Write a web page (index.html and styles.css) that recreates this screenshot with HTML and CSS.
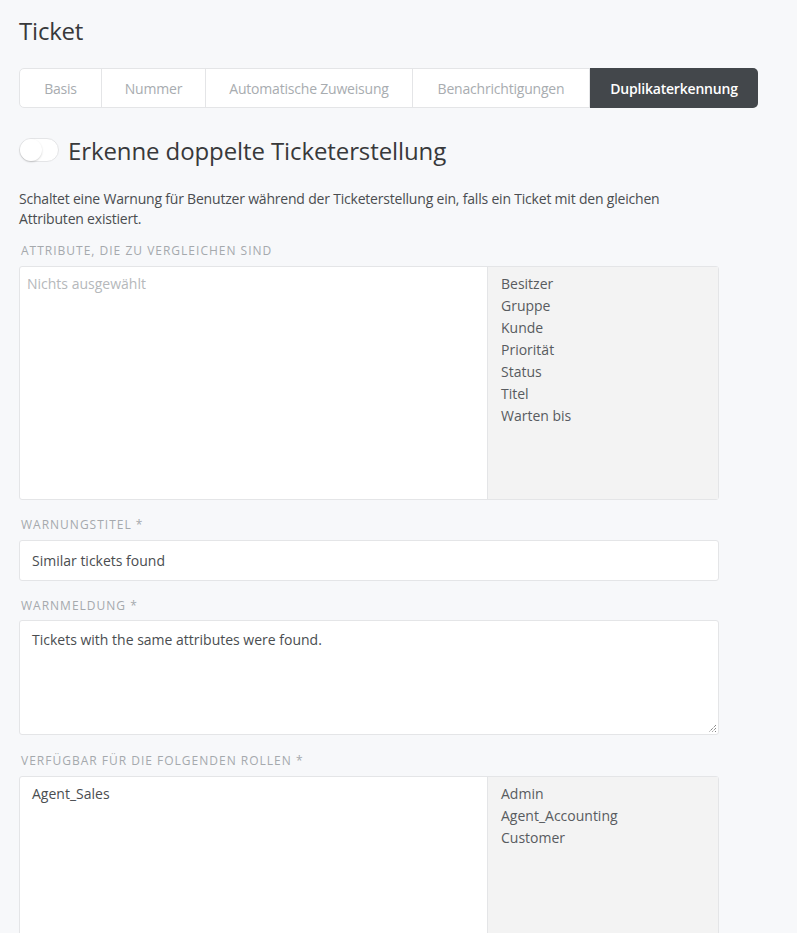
FILE: index.html
```html
<!DOCTYPE html>
<html lang="de">
<head>
<meta charset="utf-8">
<title>Ticket</title>
<link rel="stylesheet" href="styles.css">
</head>
<body>
<div class="page">
  <h1 class="title">Ticket</h1>
  <nav class="tabs">
    <div class="tab tab-basis">Basis</div>
    <div class="tab tab-nummer">Nummer</div>
    <div class="tab tab-auto">Automatische Zuweisung</div>
    <div class="tab tab-notify">Benachrichtigungen</div>
    <div class="tab tab-dup active">Duplikaterkennung</div>
  </nav>

  <div class="switch-row">
    <span class="switch"><span class="knob"></span></span>
    <h2 class="switch-title">Erkenne doppelte Ticketerstellung</h2>
  </div>

  <p class="desc">Schaltet eine Warnung für Benutzer während der Ticketerstellung ein, falls ein Ticket mit den gleichen Attributen existiert.</p>

  <div class="field field-attr">
    <div class="label">Attribute, die zu vergleichen sind</div>
    <div class="columnselect cs-attr">
      <div class="cs-selected"><span class="placeholder">Nichts ausgewählt</span></div>
      <div class="cs-options">
        <div>Besitzer</div>
        <div>Gruppe</div>
        <div>Kunde</div>
        <div>Priorität</div>
        <div>Status</div>
        <div>Titel</div>
        <div>Warten bis</div>
      </div>
    </div>
  </div>

  <div class="field">
    <div class="label">Warnungstitel *</div>
    <div class="input">Similar tickets found</div>
  </div>

  <div class="field field-msg">
    <div class="label">Warnmeldung *</div>
    <div class="textarea">Tickets with the same attributes were found.
      <svg class="grip" width="9" height="9" viewBox="0 0 9 9"><path d="M8 1L1 8M8 4L4 8M8 7L7 8" stroke="#555" stroke-width="1" stroke-dasharray="1 1"/></svg>
    </div>
  </div>

  <div class="field field-roles">
    <div class="label">Verfügbar für die folgenden Rollen *</div>
    <div class="columnselect cs-roles">
      <div class="cs-selected"><div class="sel-item">Agent_Sales</div></div>
      <div class="cs-options">
        <div>Admin</div>
        <div>Agent_Accounting</div>
        <div>Customer</div>
      </div>
    </div>
  </div>
</div>
</body>
</html>
```

FILE: styles.css
```css
* { box-sizing: border-box; }
html, body { margin: 0; padding: 0; }
body {
  background: #f7f8fa;
  font-family: "Open Sans", "Noto Sans", sans-serif;
  color: #4a4d50;
  overflow: hidden;
  height: 933px;
}
.page { padding: 14px 0 0 19px; width: 740px; }
.title {
  margin: 0;
  font-size: 24px;
  font-weight: 400;
  color: #38393b;
  line-height: 34px;
  letter-spacing: -0.2px;
}
.tabs {
  display: flex;
  margin-top: 20px;
  height: 40px;
  width: 739px;
  border: 1px solid #e4e5e7;
  border-radius: 5px;
  background: #fff;
}
.tab {
  display: flex;
  align-items: center;
  justify-content: center;
  font-size: 14px;
  color: #a8acb0;
  border-right: 1px solid #e4e5e7;
  letter-spacing: -0.2px;
}
.tab-basis { width: 82px; }
.tab-nummer { width: 104px; }
.tab-auto { width: 207px; }
.tab-notify { width: 177px; }
.tab-dup { flex: 1; border-right: 0; }
.tab.active {
  background: #43474b;
  color: #fff;
  font-weight: 600;
  border-radius: 0 5px 5px 0;
  margin: -1px -1px -1px 0;
}
.switch-row {
  display: flex;
  align-items: center;
  margin-top: 27px;
  height: 30px;
}
.switch {
  width: 40px;
  height: 24px;
  border-radius: 12px;
  background: #fff;
  border: 1px solid #e4e5e7;
  position: relative;
  flex: none;
}
.knob {
  position: absolute;
  left: 0;
  top: 0;
  width: 22px;
  height: 22px;
  border-radius: 50%;
  background: #fff;
  box-shadow: 0 1px 2px rgba(0,0,0,0.18);
}
.switch-title {
  margin: 0 0 0 9px;
  font-size: 24px;
  font-weight: 400;
  color: #38393b;
  letter-spacing: -0.1px;
}
.desc {
  margin: 24px 0 0;
  font-size: 14px;
  line-height: 20px;
  color: #4a4d50;
  width: 668px;
  letter-spacing: -0.2px;
}
.field { margin-top: 17px; }
.field-attr { margin-top: 14px; }
.field-roles { margin-top: 18px; }
.label {
  text-transform: uppercase;
  font-size: 12px;
  letter-spacing: 1px;
  color: #a5a9ad;
  line-height: 16px;
  padding-left: 2px;
  margin-bottom: 7px;
}
.field-msg .label { margin-bottom: 6px; }
.columnselect {
  display: flex;
  width: 700px;
  border: 1px solid #e4e5e7;
  border-radius: 3px;
  background: #fff;
  font-size: 14px;
  line-height: 22px;
}
.cs-attr { height: 234px; }
.cs-roles { height: 200px; }
.cs-selected {
  flex: 1;
  padding: 6px 7px;
}
.placeholder { color: #b5b8bb; }
.sel-item { padding-left: 5px; color: #4a4d50; }
.cs-options {
  width: 231px;
  background: #f3f3f3;
  border-left: 1px solid #e4e5e7;
  padding: 6px 12px 6px 13px;
  color: #585b5f;
}
.cs-options div { line-height: 22px; }
.input {
  width: 700px;
  height: 41px;
  background: #fff;
  border: 1px solid #e4e5e7;
  border-radius: 3px;
  font-size: 14px;
  line-height: 39px;
  padding: 0 12px;
  color: #4a4d50;
}
.textarea {
  position: relative;
  width: 700px;
  height: 115px;
  background: #fff;
  border: 1px solid #e4e5e7;
  border-radius: 3px;
  font-size: 14px;
  line-height: 20px;
  padding: 9px 12px;
  color: #4a4d50;
}
.grip { position: absolute; right: 1px; bottom: 1px; }
```
